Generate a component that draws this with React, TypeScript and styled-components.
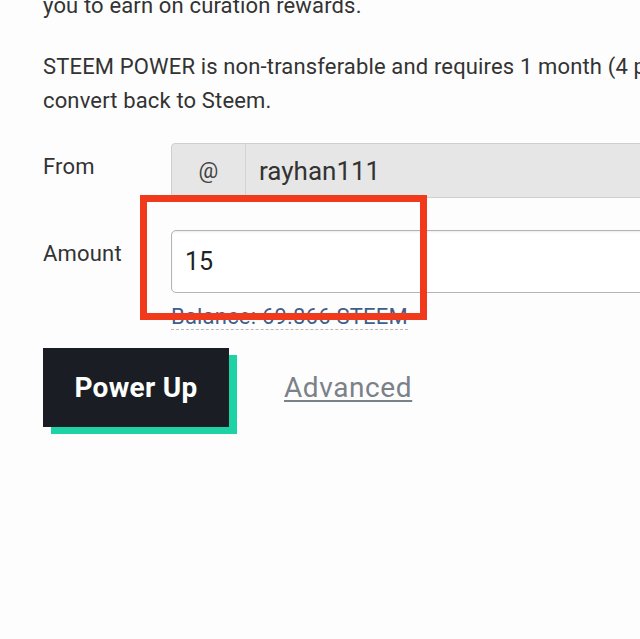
import styled, { createGlobalStyle } from 'styled-components';

const Global = createGlobalStyle`
  html, body {
    margin: 0;
    padding: 0;
    background: #fdfdfd;
    overflow: hidden;
  }
  body {
    font-family: Roboto, "Liberation Sans", sans-serif;
    color: #333;
  }
`;

//Обёртка страницы (верх обрезан как на скриншоте)
const Page = styled.div`
  width: 640px;
  height: 639px;
  overflow: hidden;
  padding-left: 43px;
  box-sizing: border-box;
`;

const Text = styled.p`
  margin: 0 0 27px;
  font-size: 22px;
  letter-spacing: 0.15px;
  line-height: 34px;
  color: #333;
  white-space: nowrap;
  &:first-child {
    margin-top: -11px;
  }
`;

const Form = styled.div`
  display: grid;
  grid-template-columns: 128px 1fr;
  row-gap: 32px;
  margin-top: -2px;
`;

const Label = styled.div`
  font-size: 22px;
  letter-spacing: 0.2px;
  line-height: 34px;
  padding-top: 7px;
  color: #333;
`;

const Group = styled.div`
  display: flex;
  height: 55px;
  margin-right: -4px;
  border: 1px solid #cfcfcf;
  border-radius: 4px 0 0 4px;
  background: #e6e6e6;
  box-sizing: border-box;
`;

const Addon = styled.div`
  width: 73px;
  display: flex;
  align-items: center;
  justify-content: center;
  border-right: 1px solid #d4d4d4;
  font-size: 22px;
  color: #444;
`;

const GroupValue = styled.div`
  display: flex;
  align-items: center;
  padding-left: 13px;
  font-size: 26px;
  color: #333;
`;

const AmountCell = styled.div`
  position: relative;
`;

const Input = styled.div`
  height: 63px;
  margin-right: -4px;
  border: 1px solid #b4b4b4;
  border-radius: 5px 0 0 5px;
  background: #fff;
  box-shadow: inset 0 1px 2px rgba(0, 0, 0, 0.08);
  display: flex;
  align-items: center;
  padding-left: 13px;
  font-size: 25px;
  color: #222;
  box-sizing: border-box;
`;

const Balance = styled.span`
  display: inline-block;
  margin-top: 12px;
  font-size: 22px;
  letter-spacing: 0.2px;
  line-height: 24px;
  color: #3e5f8c;
  border-bottom: 1px dashed #b8b8b8;
`;

//Красная рамка-пометка поверх поля
const Highlight = styled.div`
  position: absolute;
  left: -31px;
  top: -35px;
  width: 287px;
  height: 125px;
  border: 7px solid #f03a1b;
  box-sizing: border-box;
  pointer-events: none;
`;

const Actions = styled.div`
  display: flex;
  align-items: center;
  gap: 55px;
  margin-top: 18px;
`;

const PowerButton = styled.button`
  width: 186px;
  height: 79px;
  padding: 0;
  border: 0;
  background: #1a1e24;
  box-shadow: 8px 7px 0 #1dd3a6;
  color: #fff;
  font-family: Roboto, "Liberation Sans", sans-serif;
  font-weight: 700;
  font-size: 28px;
  letter-spacing: 0.3px;
  cursor: pointer;
`;

const Advanced = styled.a`
  font-size: 28px;
  letter-spacing: 0.6px;
  color: #7b8189;
  text-decoration: underline;
  text-underline-offset: 3px;
  text-decoration-thickness: 2px;
`;

export default function App() {
  return (
    <>
      <Global />
      <Page>
        <Text>you to earn on curation rewards.</Text>
        <Text>
          STEEM POWER is non-transferable and requires 1 month (4 payments) to
          <br />
          convert back to Steem.
        </Text>
        <Form>
          <Label>From</Label>
          <Group>
            <Addon>@</Addon>
            <GroupValue>rayhan111</GroupValue>
          </Group>
          <Label>Amount</Label>
          <AmountCell>
            <Input>15</Input>
            <Balance>Balance: 69.866 STEEM</Balance>
            <Highlight />
          </AmountCell>
        </Form>
        <Actions>
          <PowerButton>Power Up</PowerButton>
          <Advanced>Advanced</Advanced>
        </Actions>
      </Page>
    </>
  );
}
